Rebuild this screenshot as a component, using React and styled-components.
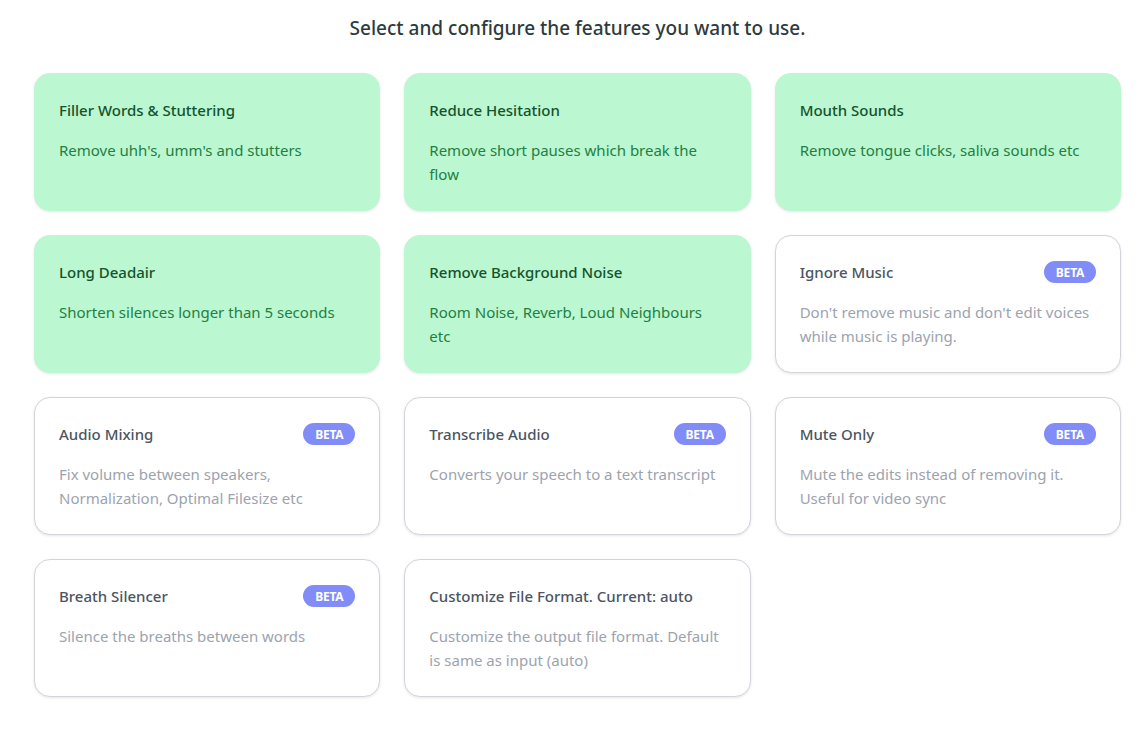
import styled, { createGlobalStyle } from "styled-components";

const GlobalStyle = createGlobalStyle`
  body {
    margin: 0;
    background: #ffffff;
    font-family: "Noto Sans", "Open Sans", sans-serif;
  }
`;

const features = [
  { title: "Filler Words & Stuttering", text: "Remove uhh's, umm's and stutters", active: true },
  { title: "Reduce Hesitation", text: "Remove short pauses which break the flow", active: true },
  { title: "Mouth Sounds", text: "Remove tongue clicks, saliva sounds etc", active: true },
  { title: "Long Deadair", text: "Shorten silences longer than 5 seconds", active: true },
  { title: "Remove Background Noise", text: "Room Noise, Reverb, Loud Neighbours etc", active: true },
  { title: "Ignore Music", text: "Don't remove music and don't edit voices while music is playing.", beta: true },
  { title: "Audio Mixing", text: "Fix volume between speakers, Normalization, Optimal Filesize etc", beta: true },
  { title: "Transcribe Audio", text: "Converts your speech to a text transcript", beta: true },
  { title: "Mute Only", text: "Mute the edits instead of removing it. Useful for video sync", beta: true },
  { title: "Breath Silencer", text: "Silence the breaths between words", beta: true },
  { title: "Customize File Format. Current: auto", text: "Customize the output file format. Default is same as input (auto)" },
];

export default function App() {
  return (
    <Page>
      <GlobalStyle />
      <Heading>Select and configure the features you want to use.</Heading>
      <Grid>
        {features.map((f) => (
          <Card key={f.title} $active={f.active}>
            <CardHead>
              <Title $active={f.active}>{f.title}</Title>
              {f.beta && <Badge>BETA</Badge>}
            </CardHead>
            <Desc $active={f.active}>{f.text}</Desc>
          </Card>
        ))}
      </Grid>
    </Page>
  );
}

const Page = styled.div`
  padding: 14px 27px 30px 34px;
`;

const Heading = styled.h1`
  margin: 0 0 31px;
  text-align: center;
  font-size: 19px;
  font-weight: 500;
  line-height: 28px;
  color: #2d3b3f;
`;

const Grid = styled.div`
  display: grid;
  grid-template-columns: repeat(3, 1fr);
  gap: 24px;
`;

const Card = styled.div`
  box-sizing: border-box;
  height: 138px;
  padding: 24px 24px;
  border-radius: 16px;
  background: ${(p) => (p.$active ? "#bbf7d0" : "#ffffff")};
  border: 1px solid ${(p) => (p.$active ? "#bbf7d0" : "#d1d5db")};
  box-shadow: 0 1px 3px rgba(0, 0, 0, 0.1);
  cursor: pointer;
`;

const CardHead = styled.div`
  display: flex;
  align-items: center;
  justify-content: space-between;
  height: 24px;
  margin-bottom: 16px;
`;

const Title = styled.div`
  font-size: 15px;
  font-weight: 500;
  color: ${(p) => (p.$active ? "#14532d" : "#4b5563")};
`;

const Desc = styled.p`
  margin: 0;
  font-size: 15px;
  line-height: 24px;
  color: ${(p) => (p.$active ? "#1e8045" : "#9ca3af")};
`;

const Badge = styled.span`
  display: inline-flex;
  align-items: center;
  justify-content: center;
  width: 52px;
  height: 22px;
  border-radius: 11px;
  background: #818cf8;
  color: #ffffff;
  font-size: 12px;
  font-weight: 700;
  letter-spacing: -0.2px;
`;
